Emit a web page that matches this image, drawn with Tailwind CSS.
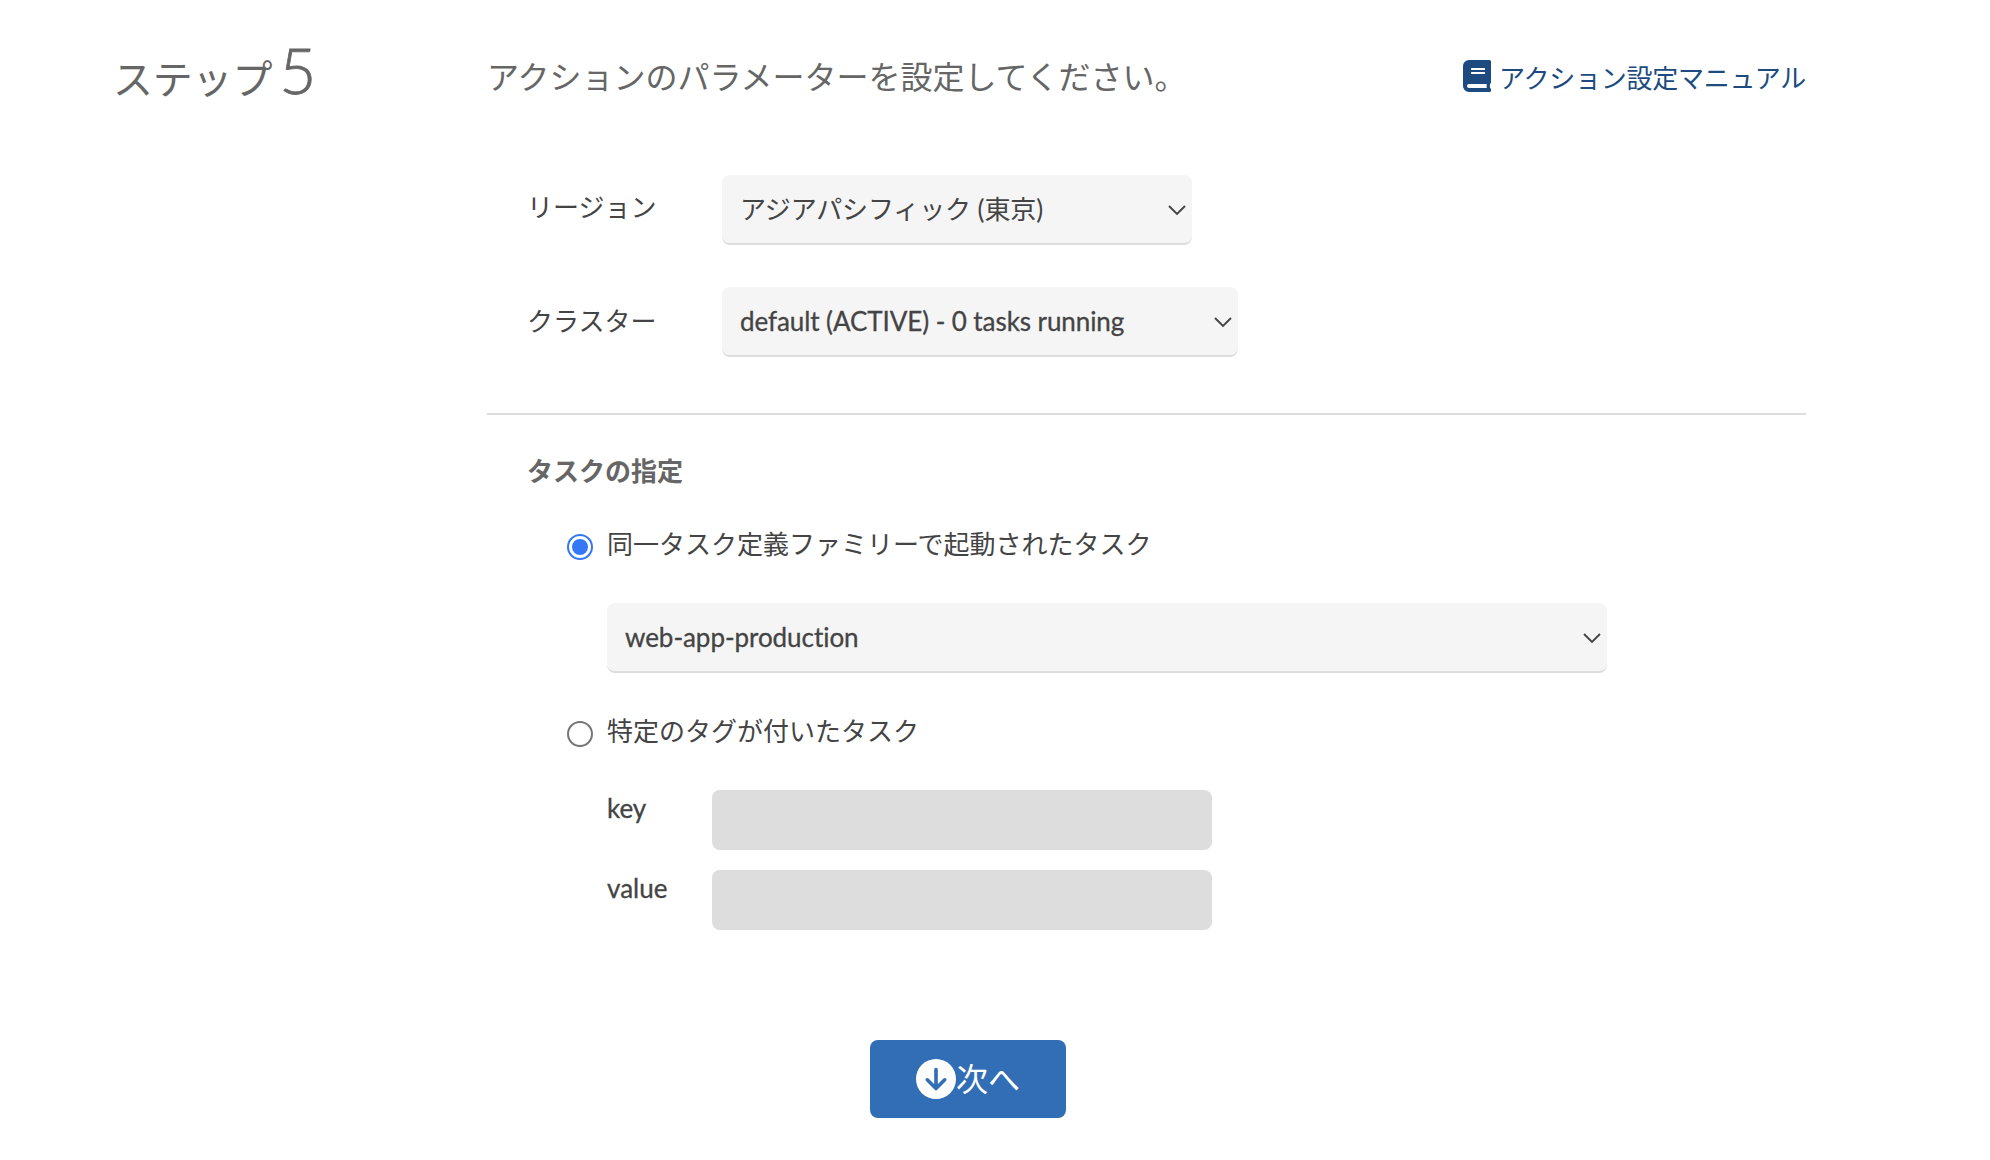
<!DOCTYPE html>
<html lang="ja">
<head>
  <meta charset="UTF-8">
  <meta name="viewport" content="width=device-width, initial-scale=1.0">
  <title>ステップ5</title>
  <script src="https://cdn.jsdelivr.net/npm/@tailwindcss/browser@4"></script>
</head>
<body class="bg-white font-[Lato,'Noto_Sans_CJK_JP',sans-serif] text-[26px] leading-10 text-[#444] [font-variant-ligatures:none]">
  <div class="flex w-[1806px] pl-[113px]">
    <!-- Step number -->
    <div class="w-[374px] shrink-0 pt-[30px] text-[40px] leading-[80px] font-light whitespace-nowrap text-[#666]"><span class="font-normal tracking-[-0.2px]">ステップ</span><span class="ml-[7px] text-[64px] [-webkit-text-stroke:0.8px_#666]">5</span></div>

    <div class="w-[1319px] shrink-0 pt-[58px]">
      <!-- Heading -->
      <div class="flex h-10 items-center justify-between">
        <h1 class="-mt-[2px] text-[32px] leading-10 whitespace-nowrap text-[#666]">アクションのパラメーターを設定してください。</h1>
        <a href="#" class="flex items-center gap-2 whitespace-nowrap text-[#1d4b80]">
          <svg class="mb-1 h-8 w-7" viewBox="0 0 28 32" fill="currentColor"><path fill-rule="evenodd" d="M6 0h20.500A1.500 1.500 0 0 1 28 1.500v21a1.500 1.500 0 0 1-.8 1.300q-.7 2.200 0 4.400a2 2 0 0 1-.7 3.800H6a6 6 0 0 1-6-6V6a6 6 0 0 1 6-6zM8.500 8a.5.5 0 0 0-.5.5v1a.5.5 0 0 0 .5.5h13a.5.5 0 0 0 .5-.5v-1a.5.5 0 0 0-.5-.5zM8.500 12a.5.5 0 0 0-.5.5v1a.5.5 0 0 0 .5.5h13a.5.5 0 0 0 .5-.5v-1a.5.5 0 0 0-.5-.5zM6 24a2 2 0 0 0 0 4h17.800q-.4-2 0-4z"/></svg>
          <span class="tracking-[-0.25px]">アクション設定マニュアル</span>
        </a>
      </div>

      <!-- Region / cluster -->
      <div class="mt-[77px] flex flex-col gap-[42px] pl-10">
        <div class="flex h-[70px]">
          <div class="w-[195px] pt-3">リージョン</div>
          <div class="flex w-[470px] items-center justify-between rounded-lg border-b-2 border-[#ddd] bg-[#f5f5f5] pr-[6px] pl-[18px]">
            <span class="tracking-[-0.1px]">アジアパシフィック (東京)</span>
            <svg class="mt-px h-3 w-[18px]" viewBox="0 0 18 12" fill="none" stroke="#444" stroke-width="1.900"><path d="M1 2l8 8 8-8"/></svg>
          </div>
        </div>
        <div class="flex h-[70px]">
          <div class="w-[195px] pt-[14px]">クラスター</div>
          <div class="flex w-[516px] items-center justify-between rounded-lg border-b-2 border-[#ddd] bg-[#f5f5f5] pr-[6px] pl-[18px]">
            <span class="tracking-[-0.08px] [-webkit-text-stroke:0.3px_#444]">default (ACTIVE) - 0 tasks running</span>
            <svg class="mt-px h-3 w-[18px]" viewBox="0 0 18 12" fill="none" stroke="#444" stroke-width="1.900"><path d="M1 2l8 8 8-8"/></svg>
          </div>
        </div>
      </div>

      <hr class="mt-14 border-t-2 border-[#ddd]">

      <!-- Task selection -->
      <div class="pt-9 pl-10">
        <h2 class="font-bold text-[#666]">タスクの指定</h2>
        <div class="pt-[33px] pl-10">
          <label class="flex h-10 gap-[14px]">
            <span class="mt-[10px] flex size-[26px] items-center justify-center rounded-full border-2 border-[#3478f6]"><span class="size-4 rounded-full bg-[#3478f6]"></span></span>
            <span>同一タスク定義ファミリーで起動されたタスク</span>
          </label>
          <div class="mt-[39px] ml-10 flex h-[70px] w-[1000px] items-center justify-between rounded-lg border-b-2 border-[#ddd] bg-[#f5f5f5] pr-[6px] pl-[18px]">
            <span class="tracking-[-0.05px] [-webkit-text-stroke:0.3px_#444]">web-app-production</span>
            <svg class="mt-px h-3 w-[18px]" viewBox="0 0 18 12" fill="none" stroke="#444" stroke-width="1.900"><path d="M1 2l8 8 8-8"/></svg>
          </div>
          <label class="mt-[38px] flex h-10 gap-[14px]">
            <span class="mt-[10px] size-[26px] rounded-full border-2 border-[#767676]"></span>
            <span>特定のタグが付いたタスク</span>
          </label>
          <div class="mt-[39px] ml-10 flex flex-col gap-5">
            <div class="flex h-[60px]">
              <span class="-mt-[2px] w-[105px] [-webkit-text-stroke:0.3px_#444]">key</span>
              <div class="w-[500px] rounded-lg bg-[#ddd]"></div>
            </div>
            <div class="flex h-[60px]">
              <span class="-mt-[2px] w-[105px] [-webkit-text-stroke:0.3px_#444]">value</span>
              <div class="w-[500px] rounded-lg bg-[#ddd]"></div>
            </div>
          </div>
        </div>
      </div>

      <!-- Next -->
      <button class="mt-[110px] ml-[383px] flex h-[78px] w-[196px] items-center justify-center rounded-lg bg-[#326eb5] text-[32px] text-white">
        <svg class="size-10" viewBox="0 0 40 40" fill="none"><circle cx="20" cy="20" r="20" fill="#fff"/><path d="M20 10.500v19M11.300 20.800l8.700 8.700 8.700-8.700" stroke="#326eb5" stroke-width="3.600" stroke-linecap="round" stroke-linejoin="round"/></svg>
        <span>次へ</span>
      </button>
    </div>
  </div>
</body>
</html>
